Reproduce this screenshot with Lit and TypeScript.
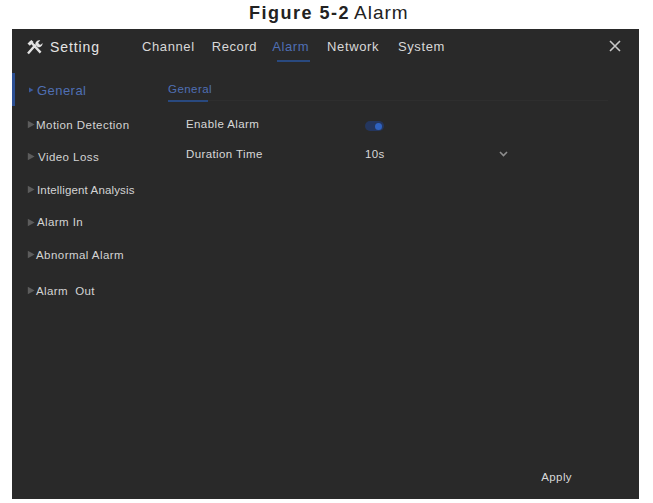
import { LitElement, html, css } from "lit";
import { customElement } from "lit/decorators.js";

const tabs = [
  { label: "Channel", gap: 0 },
  { label: "Record", gap: 17 },
  { label: "Alarm", gap: 15, active: true },
  { label: "Network", gap: 18 },
  { label: "System", gap: 19 },
];

const side = [
  { label: "General", h: 38, active: true, gap: 3, ls: 0.45 },
  { label: "Motion Detection", h: 31, gap: 0, ls: 0.45 },
  { label: "Video Loss", h: 33, gap: 2, ls: 0.45 },
  { label: "Intelligent Analysis", h: 33, gap: 1, ls: 0.15 },
  { label: "Alarm In", h: 32, gap: 1, ls: 0.4 },
  { label: "Abnormal Alarm", h: 33, gap: 0, ls: 0.45 },
  { label: "Alarm  Out", h: 39, gap: 0, ls: 0.4 },
];

@customElement("app-root")
export class AppRoot extends LitElement {
  static styles = css`
    :host {
      display: block;
      width: 653px;
      height: 503px;
      background: #fff;
      font-family: "Liberation Sans", Arial, sans-serif;
      overflow: hidden;
    }
    .caption {
      height: 29px;
      padding: 0 0 3px 249px;
      box-sizing: border-box;
      display: flex;
      align-items: center;
      gap: 4px;
      color: #222;
      line-height: 24px;
    }
    .caption b { font-size: 18px; letter-spacing: 1.5px; }
    .caption span { font-size: 19px; letter-spacing: 1px; }
    .panel {
      margin-left: 12px;
      width: 627px;
      height: 470px;
      background: #292929;
      display: flex;
      flex-direction: column;
      color: #dcdcdc;
    }
    .top {
      height: 40px;
      flex: none;
      box-sizing: border-box;
      display: flex;
      align-items: center;
      padding: 0 18px 4px 14px;
    }
    .brand {
      width: 116px;
      display: flex;
      align-items: center;
      gap: 7px;
      font-size: 14px;
      letter-spacing: 0.9px;
      color: #e4e4e4;
    }
    .tabs { display: flex; flex: 1; font-size: 13px; letter-spacing: 0.6px; }
    .tab { position: relative; color: #d8d8d8; line-height: 16px; }
    .tab.on { color: #4f6fb4; }
    .tab.on::after {
      content: "";
      position: absolute;
      left: 5px;
      right: -1px;
      top: 21px;
      height: 2px;
      background: #29497f;
    }
    .close { display: block; margin-top: -3px; }
    .body { flex: 1; display: flex; min-height: 0; }
    .side { width: 128px; flex: none; padding-top: 2px; }
    .row {
      display: flex;
      align-items: center;
      padding-left: 15px;
      font-size: 11.5px;
      color: #d4d4d4;
      white-space: pre;
      box-sizing: border-box;
      position: relative;
    }
    .row.on { font-size: 13px; color: #4f6fb4; padding-left: 16px; }
    .row.on::before {
      content: "";
      position: absolute;
      left: 0;
      top: 2px;
      bottom: 3px;
      width: 3px;
      background: #2c4f93;
    }
    .arrow { flex: none; display: block; }
    .main { flex: 1; padding-left: 28px; display: flex; flex-direction: column; }
    .subtabs {
      height: 32px;
      flex: none;
      border-bottom: 1px solid #2e2e2e;
      box-sizing: border-box;
      width: 440px;
      display: flex;
      align-items: center;
      padding-top: 8px;
    }
    .sub {
      font-size: 11.5px;
      letter-spacing: 0.45px;
      color: #4f6fb4;
      position: relative;
      line-height: 14px;
    }
    .sub::after {
      content: "";
      position: absolute;
      left: 0;
      width: 40px;
      top: 18px;
      height: 2px;
      background: #29497f;
    }
    .form { padding: 8px 0 0 18px; width: 322px; }
    .field {
      display: flex;
      align-items: center;
      height: 30px;
      font-size: 11.5px;
      letter-spacing: 0.4px;
      color: #d8d8d8;
    }
    .field .name { width: 179px; flex: none; }
    .field .val { flex: 1; display: flex; align-items: center; justify-content: space-between; }
    .toggle {
      width: 19px;
      height: 10px;
      border-radius: 6px;
      background: #24365e;
      position: relative;
      display: block;
      margin-top: 4px;
    }
    .toggle::after {
      content: "";
      position: absolute;
      right: 2px;
      top: 1.5px;
      width: 7px;
      height: 7px;
      border-radius: 50%;
      background: #2f62c0;
    }
    .foot {
      margin-top: auto;
      display: flex;
      justify-content: flex-end;
      padding: 0 67px 16px 0;
      font-size: 11.5px;
      letter-spacing: 0.4px;
      color: #d8d8d8;
    }
  `;

  render() {
    return html`
      <div class="caption"><b>Figure 5-2</b><span>Alarm</span></div>
      <div class="panel">
        <div class="top">
          <div class="brand">
            <svg width="17" height="16" viewBox="0 0 17 16">
              <path d="M2 14.5 9.6 5.8M4.2 2.2 14.6 13.6" fill="none" stroke="#e2e2e2" stroke-width="2.4"/>
              <path d="M1.5 4.6 5.4 1 7.6 3 3.8 6.8z" fill="#e2e2e2"/>
              <path d="M9.2 5.6c0-2.6 2.2-4.6 5-4.2l-2 2 .8 1.8 1.8.5 1.7-1.7c.3 2.6-2 4.7-4.6 4.2z" fill="#e2e2e2"/>
            </svg>
            Setting
          </div>
          <div class="tabs">
            ${tabs.map(
              (t) => html`<span class="tab ${t.active ? "on" : ""}" style="margin-left:${t.gap}px">${t.label}</span>`
            )}
          </div>
          <svg class="close" width="12" height="12" viewBox="0 0 12 12">
            <path d="M1 1 11 11M11 1 1 11" stroke="#c8c8c8" stroke-width="1.6" fill="none"/>
          </svg>
        </div>
        <div class="body">
          <div class="side">
            ${side.map(
              (s) => html`<div class="row ${s.active ? "on" : ""}" style="height:${s.h}px;gap:${s.gap}px;letter-spacing:${s.ls}px">
                ${s.active
                  ? html`<svg class="arrow" width="6" height="6" viewBox="0 0 6 6"><path d="M1 .5 5.5 3 1 5.5z" fill="#3c5a9c"/></svg>`
                  : html`<svg class="arrow" width="9" height="9" viewBox="0 0 9 9"><path d="M.8.8 7.6 4.5.8 8.2z" fill="#5c5c5c"/></svg>`}
                <span>${s.label}</span>
              </div>`
            )}
          </div>
          <div class="main">
            <div class="subtabs"><span class="sub">General</span></div>
            <div class="form">
              <div class="field">
                <span class="name">Enable Alarm</span>
                <span class="val"><span class="toggle"></span></span>
              </div>
              <div class="field">
                <span class="name">Duration Time</span>
                <span class="val">
                  <span>10s</span>
                  <svg width="9" height="6" viewBox="0 0 9 6"><path d="M1 1 4.5 4.5 8 1" fill="none" stroke="#8d8d8d" stroke-width="1.6"/></svg>
                </span>
              </div>
            </div>
            <div class="foot">Apply</div>
          </div>
        </div>
      </div>
    `;
  }
}
